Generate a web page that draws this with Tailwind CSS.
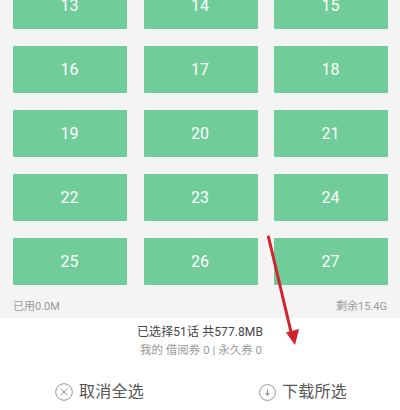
<!DOCTYPE html>
<html lang="zh">
<head>
<meta charset="utf-8">
<script src="https://cdn.jsdelivr.net/npm/@tailwindcss/browser@4"></script>
</head>
<body class="m-0 bg-white overflow-hidden font-['Roboto','Noto_Sans_CJK_SC',sans-serif]">
<div class="relative w-[400px] h-[410px] overflow-hidden flex flex-col">
  <div class="h-[318px] shrink-0 bg-[#f4f4f4] overflow-hidden">
    <div class="grid grid-cols-[114px_114px_114px] gap-x-[16.5px] gap-y-[17px] px-[13px] -mt-[18px] text-white text-[16px] font-normal">
      <div class="h-[47px] rounded-[1px] bg-[#70cd99] flex items-center justify-center pr-[1px]">13</div>
      <div class="h-[47px] rounded-[1px] bg-[#70cd99] flex items-center justify-center pr-[1px]">14</div>
      <div class="h-[47px] rounded-[1px] bg-[#70cd99] flex items-center justify-center pr-[1px]">15</div>
      <div class="h-[47px] rounded-[1px] bg-[#70cd99] flex items-center justify-center pr-[1px]">16</div>
      <div class="h-[47px] rounded-[1px] bg-[#70cd99] flex items-center justify-center pr-[1px]">17</div>
      <div class="h-[47px] rounded-[1px] bg-[#70cd99] flex items-center justify-center pr-[1px]">18</div>
      <div class="h-[47px] rounded-[1px] bg-[#70cd99] flex items-center justify-center pr-[1px]">19</div>
      <div class="h-[47px] rounded-[1px] bg-[#70cd99] flex items-center justify-center pr-[1px]">20</div>
      <div class="h-[47px] rounded-[1px] bg-[#70cd99] flex items-center justify-center pr-[1px]">21</div>
      <div class="h-[47px] rounded-[1px] bg-[#70cd99] flex items-center justify-center pr-[1px]">22</div>
      <div class="h-[47px] rounded-[1px] bg-[#70cd99] flex items-center justify-center pr-[1px]">23</div>
      <div class="h-[47px] rounded-[1px] bg-[#70cd99] flex items-center justify-center pr-[1px]">24</div>
      <div class="h-[47px] rounded-[1px] bg-[#70cd99] flex items-center justify-center pr-[1px]">25</div>
      <div class="h-[47px] rounded-[1px] bg-[#70cd99] flex items-center justify-center pr-[1px]">26</div>
      <div class="h-[47px] rounded-[1px] bg-[#70cd99] flex items-center justify-center pr-[1px]">27</div>
    </div>
    <div class="flex justify-between px-[13px] mt-[13.5px] text-[11px] leading-[16px] text-[#9a9a9a]">
      <span>已用0.0M</span><span>剩余15.4G</span>
    </div>
  </div>
  <div class="flex flex-col items-center h-[42px] pt-[6px]">
    <div class="text-[12px] leading-[16px] text-[#444] tracking-[0.1px]">已选择51话 共577.8MB</div>
    <div class="text-[11.5px] leading-[16px] mt-[2px] text-[#999] pl-[2px]">我的 借阅券 0 | 永久券 0</div>
  </div>
  <div class="flex items-center flex-1 pt-[14px] text-[16px] text-[#555] tracking-[0.25px]">
    <div class="w-[200px] flex items-center justify-center gap-[6px] pr-[1px]">
      <svg width="18" height="18" viewBox="0 0 18 18" fill="none" stroke="#8a8a8a" stroke-width="0.9"><circle cx="9" cy="9" r="8.3"/><path d="M5.8 5.8l6.4 6.4M12.2 5.8l-6.4 6.4"/></svg>
      <span>取消全选</span>
    </div>
    <div class="w-[200px] flex items-center justify-center gap-[6px] pl-[6px]">
      <svg width="17" height="17" viewBox="0 0 17 17" fill="none" stroke="#8a8a8a" stroke-width="0.9"><circle cx="8.5" cy="8.5" r="7.9"/><path d="M8.5 5.500v5.500M6.500 9l2 2.200 2-2.200" stroke-width="1.100"/></svg>
      <span>下载所选</span>
    </div>
  </div>
  <svg class="absolute left-[262px] top-[232px]" width="40" height="120" viewBox="0 0 40 120" fill="none">
    <path d="M6.500 5L29 100" stroke="#d2222c" stroke-width="3" stroke-linecap="round"/>
    <path d="M24 100.500L37 97L33 113Z" fill="#d2222c"/>
  </svg>
</div>
</body>
</html>
